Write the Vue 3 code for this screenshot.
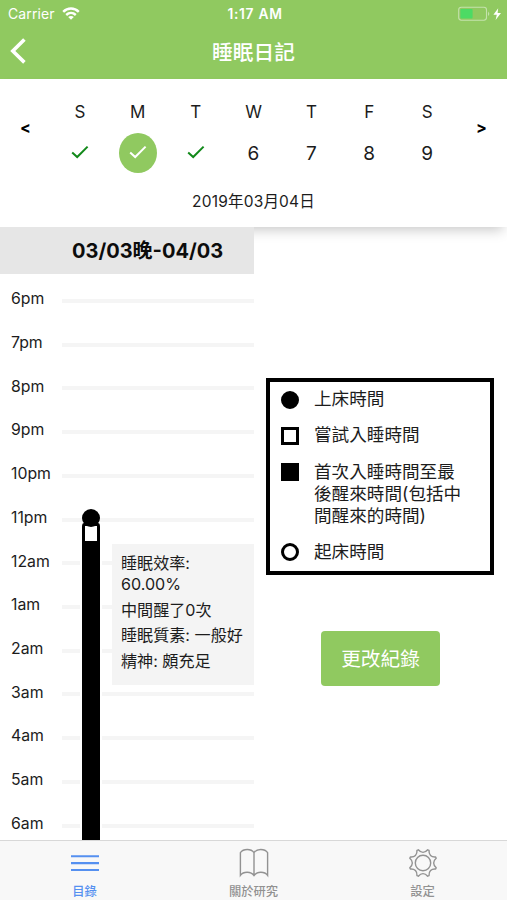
<script setup>
const days = [
  { name: 'S', done: true },
  { name: 'M', done: true, active: true },
  { name: 'T', done: true },
  { name: 'W', date: 6 },
  { name: 'T', date: 7 },
  { name: 'F', date: 8 },
  { name: 'S', date: 9 },
]
const hours = ['6pm', '7pm', '8pm', '9pm', '10pm', '11pm', '12am', '1am', '2am', '3am', '4am', '5am', '6am']
const legend = [
  { mark: 'dot', text: '上床時間' },
  { mark: 'box', text: '嘗試入睡時間' },
  { mark: 'solid', text: '首次入睡時間至最後醒來時間(包括中間醒來的時間)' },
  { mark: 'ring', text: '起床時間' },
]

// Outline of the settings gear: eight pointed teeth joined by concave arcs.
const gear = (() => {
  const pt = (r, deg) => {
    const a = (deg * Math.PI) / 180
    return `${(15 + r * Math.cos(a)).toFixed(2)} ${(15 + r * Math.sin(a)).toFixed(2)}`
  }
  let d = `M${pt(14, 19.5)}`
  for (let i = 0; i < 8; i++) {
    const c = 22.5 + i * 45
    d += `L${pt(14, c + 3)}C${pt(10, c + 12)} ${pt(10, c + 33)} ${pt(14, c + 42)}`
  }
  return d + 'Z'
})()
</script>

<template>
  <div class="screen">
    <header class="header">
      <div class="status">
        <div class="carrier">
          <span>Carrier</span>
          <svg width="18" height="14" viewBox="0 0 18 14" fill="none" stroke="#fff" stroke-width="2.4">
            <path d="M1.2 4.900C5.600.4 12.400.4 16.800 4.900" />
            <path d="M4.200 8C7 5.400 11 5.400 13.800 8" />
            <path d="M9 12.800L6.200 10C7.800 8.600 10.200 8.600 11.800 10Z" fill="#fff" stroke="none" />
          </svg>
        </div>
        <span class="clock">1:17 AM</span>
        <svg class="battery" width="44" height="16" viewBox="0 0 44 16">
          <rect x=".7" y="1.2" width="27.8" height="13" rx="2.6" fill="none" stroke="#c4e2ac" stroke-width="1.1" />
          <rect x="2.4" y="3" width="12.2" height="9.4" rx="1" fill="#4cdb64" />
          <path d="M30 5.4Q32.6 7.7 30 10Z" fill="#c4e2ac" />
          <path d="M40.2 2.2L35.4 8.800H38.800L37.600 14L43 7H39.600Z" fill="#fff" />
        </svg>
      </div>
      <div class="titlebar">
        <svg class="back" width="16" height="26" viewBox="0 0 16 26" fill="none" stroke="#fff" stroke-width="3.6">
          <path d="M14.4 1.4L2.8 13L14.4 24.4" />
        </svg>
        <h1>睡眠日記</h1>
      </div>
    </header>

    <section class="calendar">
      <div class="week">
        <span class="arrow">&lt;</span>
        <div class="days">
          <div v-for="(d, i) in days" :key="i" class="day">
            <span class="name">{{ d.name }}</span>
            <span class="date" :class="{ active: d.active }">
              <svg v-if="d.done" width="18" height="14" viewBox="0 0 18 14" fill="none" stroke="currentColor" stroke-width="2">
                <path d="M1.2 7.4L6.2 12L16.6 1.6" />
              </svg>
              <template v-else>{{ d.date }}</template>
            </span>
          </div>
        </div>
        <span class="arrow">&gt;</span>
      </div>
      <div class="full-date">2019年03月04日</div>
    </section>

    <main class="content">
      <section class="timeline">
        <h2>03/03晚-04/03</h2>
        <div class="chart">
          <div v-for="(h, i) in hours" :key="i" class="hour">
            <span>{{ h }}</span>
            <i></i>
          </div>
          <div class="bar"><i class="bed"></i><i class="attempt"></i></div>
          <div class="info">
            <p>睡眠效率:<br />60.00%</p>
            <p>中間醒了0次</p>
            <p>睡眠質素: 一般好</p>
            <p>精神: 頗充足</p>
          </div>
        </div>
      </section>
      <aside class="side">
        <ul class="legend">
          <li v-for="l in legend" :key="l.mark">
            <i :class="l.mark"></i>
            <span>{{ l.text }}</span>
          </li>
        </ul>
        <button class="edit">更改紀錄</button>
      </aside>
    </main>

    <nav class="tabs">
      <div class="tab selected">
        <svg width="30" height="30" viewBox="0 0 30 30" stroke="currentColor" stroke-width="2.1">
          <path d="M1 8.2H29M1 15.1H29M1 22H29" />
        </svg>
        <span>目錄</span>
      </div>
      <div class="tab">
        <svg width="30" height="30" viewBox="0 0 30 30" fill="none" stroke="currentColor" stroke-width="1.4">
          <path d="M15 4.6C12 .4 4.400 .4 1.400 4.600V27.400C4.400 23.200 12 23.200 15 27.600C18 23.200 25.600 23.200 28.600 27.400V4.600C25.600 .4 18 .4 15 4.600V27.600" />
        </svg>
        <span>關於研究</span>
      </div>
      <div class="tab">
        <svg width="30" height="30" viewBox="0 0 30 30" fill="none" stroke="currentColor" stroke-width="1.4" stroke-linejoin="round">
          <path :d="gear" />
          <circle cx="15" cy="15" r="7.700" />
        </svg>
        <span>設定</span>
      </div>
    </nav>
  </div>
</template>

<style>
body {
  margin: 0;
  background: #fff;
}
</style>

<style scoped>
.screen {
  width: 507px;
  height: 900px;
  display: flex;
  flex-direction: column;
  overflow: hidden;
  background: #fff;
  color: #1c1c1c;
  font-family: Inter, "Noto Sans CJK TC", sans-serif;
}
.header {
  height: 79px;
  flex: none;
  background: #90c960;
  color: #fff;
}
.status {
  height: 27px;
  display: grid;
  grid-template-columns: 1fr auto 1fr;
  align-items: center;
  padding: 0 5px 0 8px;
  font-size: 14px;
}
.carrier {
  display: flex;
  align-items: center;
  gap: 7px;
  letter-spacing: 0.1px;
}
.clock {
  font-size: 13.8px;
  font-weight: 600;
  letter-spacing: 0.7px;
}
.battery {
  justify-self: end;
}
.titlebar {
  height: 48px;
  display: grid;
  grid-template-columns: 1fr auto 1fr;
  align-items: center;
  padding: 0 10px;
}
h1 {
  margin: 0;
  grid-column: 2;
  padding-top: 3px;
  font-size: 20.700px;
  font-weight: 500;
  line-height: 30px;
}
.calendar {
  height: 148px;
  flex: none;
  box-shadow: 0 7px 12px -4px rgba(0, 0, 0, 0.22);
  position: relative;
}
.week {
  display: flex;
  padding-top: 20px;
}
.arrow {
  width: 51px;
  text-align: center;
  font-size: 16px;
  font-weight: 700;
  line-height: 57px;
  color: #000;
}
.days {
  flex: 1;
  display: flex;
}
.day {
  flex: 1;
  display: flex;
  flex-direction: column;
  align-items: center;
}
.name {
  font-size: 17px;
  line-height: 26px;
}
.date {
  width: 38px;
  height: 40px;
  margin-top: 8px;
  border-radius: 50%;
  display: flex;
  align-items: center;
  justify-content: center;
  font-size: 19px;
  color: #1c1c1c;
}
.date svg {
  color: #12891a;
  margin-bottom: 3px;
}
.date.active {
  background: #90c960;
}
.date.active svg {
  color: #fff;
}
.full-date {
  margin-top: 17px;
  text-align: center;
  font-size: 15.500px;
  line-height: 24px;
  letter-spacing: 0.2px;
}
.content {
  flex: 1;
  min-height: 0;
  display: flex;
  overflow: hidden;
}
.timeline {
  width: 254px;
  position: relative;
  z-index: 1;
}
h2 {
  margin: 0;
  height: 47px;
  padding-left: 72px;
  background: #e6e6e6;
  color: #0c0c0c;
  font-size: 20px;
  font-weight: 700;
  line-height: 49px;
  white-space: nowrap;
}
.chart {
  position: relative;
  padding-top: 5px;
}
.hour {
  height: 43.740px;
  display: flex;
  align-items: center;
  padding-left: 11px;
}
.hour span {
  width: 51px;
  font-size: 15.800px;
  line-height: 20px;
  margin-bottom: 3.500px;
}
.hour i {
  flex: 1;
  height: 4px;
  background: #f5f5f5;
}
.bar {
  position: absolute;
  left: 80px;
  top: 249px;
  width: 18px;
  height: 330px;
  background: #000;
  border: 2px solid #fff;
  border-top: 0;
  border-radius: 4px 4px 0 0;
}
.bed {
  position: absolute;
  z-index: 1;
  left: 0;
  top: -14px;
  width: 18px;
  height: 18px;
  border-radius: 50%;
  background: #000;
}
.attempt {
  position: absolute;
  left: 3px;
  top: 3px;
  width: 12px;
  height: 15px;
  background: #fff;
}
.info {
  position: absolute;
  left: 112px;
  top: 270px;
  width: 133px;
  height: 132px;
  padding: 9px 0 0 9px;
  background: #f4f4f4;
  font-size: 16.100px;
  line-height: 21px;
  white-space: nowrap;
}
.info p {
  margin: 0 0 4.600px;
}
.side {
  flex: 1;
  display: flex;
  flex-direction: column;
  align-items: center;
  padding-top: 151px;
}
.legend {
  box-sizing: border-box;
  width: 228px;
  height: 197px;
  margin: 0 1px 0 0;
  padding: 6px 24px 0 11px;
  border: 4px solid #000;
  list-style: none;
  display: flex;
  flex-direction: column;
  gap: 14.300px;
}
.legend li {
  display: flex;
  gap: 15px;
  font-size: 17.600px;
  line-height: 22px;
}
.legend i {
  box-sizing: border-box;
  flex: none;
  width: 18px;
  height: 18px;
  margin-top: 2.500px;
  border: 3.500px solid #000;
}
.legend .dot,
.legend .ring {
  border-radius: 50%;
}
.legend .dot,
.legend .solid {
  background: #000;
}
.edit {
  width: 119px;
  height: 55px;
  margin-top: 56px;
  padding: 2px 0 0;
  border: 0;
  border-radius: 4px;
  background: #90c960;
  color: #fff;
  font: 400 19.700px/53px Inter, "Noto Sans CJK TC", sans-serif;
}
.tabs {
  box-sizing: border-box;
  height: 60px;
  flex: none;
  display: flex;
  border-top: 1px solid #d8d8d8;
  background: #f8f8f8;
}
.tab {
  flex: 1;
  display: flex;
  flex-direction: column;
  align-items: center;
  padding-top: 7px;
  color: #929292;
  font-size: 12.300px;
  font-weight: 500;
  line-height: 16px;
}
.tab span {
  margin-top: 6px;
}
.tab.selected {
  color: #5590f0;
}
</style>
